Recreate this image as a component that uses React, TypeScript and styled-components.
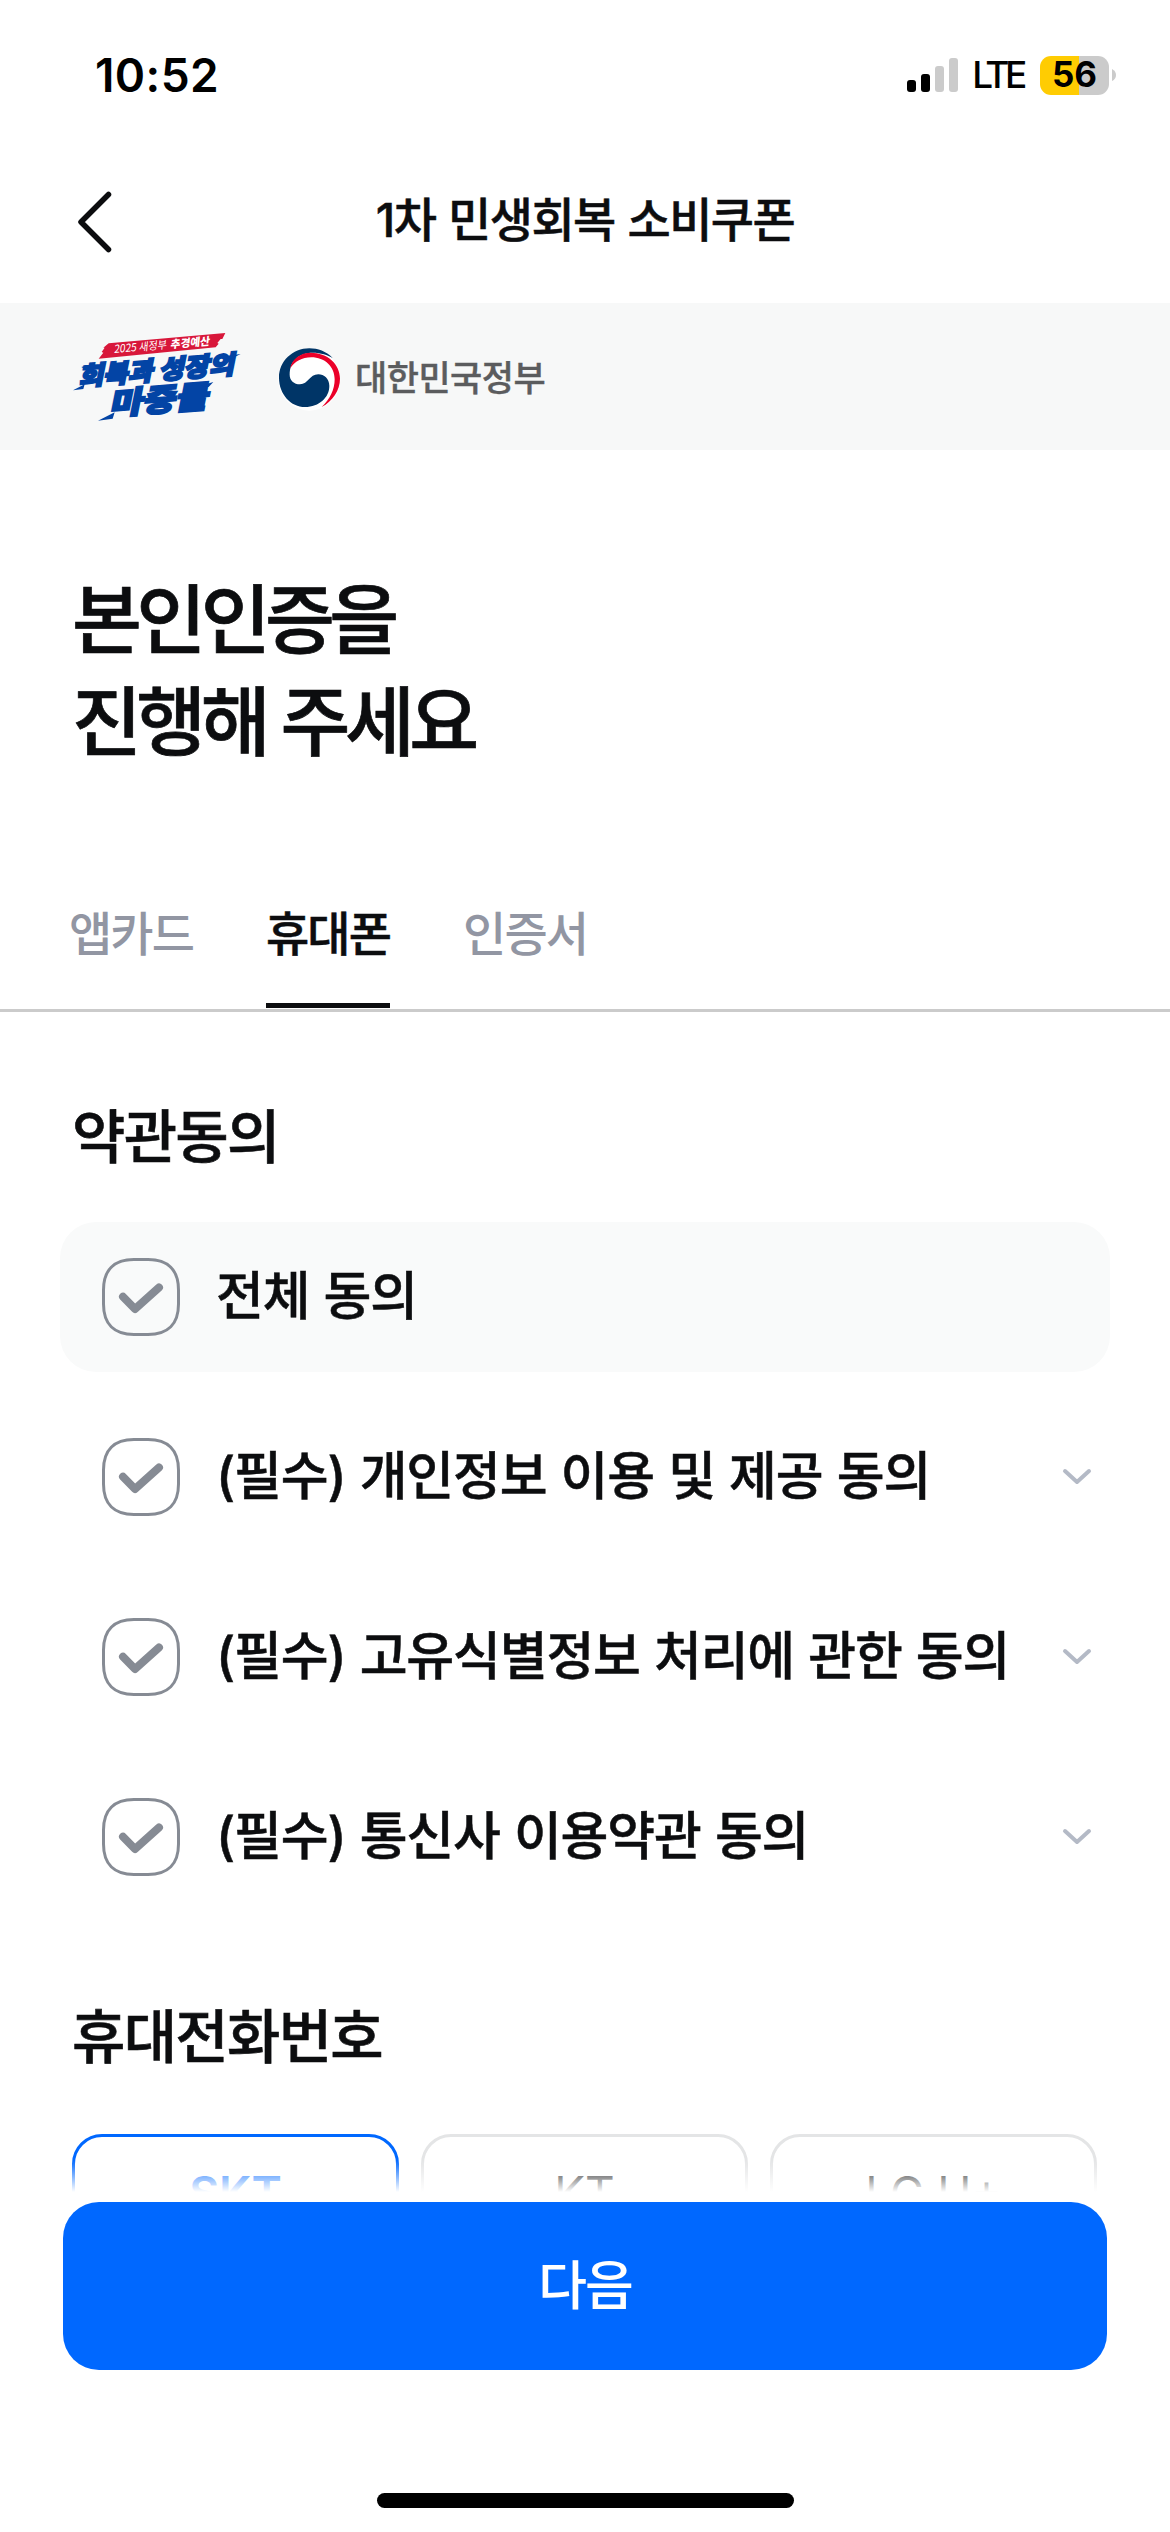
import React from "react";
import styled, { createGlobalStyle } from "styled-components";

const GlobalStyle = createGlobalStyle`
  * { box-sizing: border-box; }
  body { margin: 0; background: #fff; }
  button { font: inherit; color: inherit; background: none; border: 0; padding: 0; margin: 0; }
  svg { display: block; flex: none; overflow: visible; }
`;

const Screen = styled.div`
  width: 1170px;
  height: 2532px;
  display: flex;
  flex-direction: column;
  overflow: hidden;
  background: #fff;
  color: #0c0d0f;
  font-family: Inter, "Noto Sans CJK KR", sans-serif;
  white-space: nowrap;
`;

const StatusBar = styled.header`
  height: 150px;
  padding: 0 54px 0 95px;
  display: flex;
  align-items: center;
  justify-content: space-between;
  color: #000;
`;

const Clock = styled.time`
  font-size: 46px;
  font-weight: 600;
  letter-spacing: 0.4px;
`;

const StatusIcons = styled.div`
  display: flex;
  align-items: center;
`;

const Network = styled.span`
  margin: 0 17px 0 13px;
  font-size: 37px;
  line-height: 46px;
  font-weight: 500;
  letter-spacing: -4.4px;
`;

const Battery = styled.span`
  width: 69px;
  height: 39px;
  margin-right: 2px;
  border-radius: 11px;
  display: grid;
  justify-content: center;
  background: linear-gradient(90deg, #ffcc02 56%, #cbcbcb 56%);
  font-size: 35px;
  line-height: 37px;
  font-weight: 700;
`;

const NavBar = styled.nav`
  height: 153px;
  padding: 0 73px 9px;
  display: grid;
  grid-template-columns: 60px 1fr 60px;
  align-items: center;
`;

const NavTitle = styled.h1`
  margin: 0;
  padding-bottom: 4px;
  text-align: center;
  font-size: 47px;
  line-height: 60px;
  font-weight: 500;
  letter-spacing: -1.5px;
  word-spacing: 1.5px;
  -webkit-text-stroke: 0.5px currentColor;
`;

const Banner = styled.section`
  height: 147px;
  padding: 2px 64px 0;
  display: flex;
  align-items: center;
  gap: 16px;
  background: #f7f8f8;
`;

const Government = styled.div`
  display: flex;
  align-items: center;
  gap: 5px;
  color: #5b5c5e;
  font-size: 35px;
  line-height: 50px;
  font-weight: 500;
  letter-spacing: -0.5px;
  -webkit-text-stroke: 0.4px currentColor;
`;

const Heading = styled.h2`
  margin: 119px 0 0;
  padding: 0 72px;
  height: 202px;
  font-size: 76px;
  line-height: 102px;
  font-weight: 500;
  letter-spacing: -5.6px;
  word-spacing: 1px;
  -webkit-text-stroke: 0.7px currentColor;
`;

const Tabs = styled.div`
  margin-top: 95px;
  height: 146px;
  padding: 0 69px;
  display: flex;
  gap: 73px;
  border-bottom: 3px solid #cbcbcb;
`;

const Tab = styled.button<{ $active?: boolean }>`
  height: 142px;
  padding: 33px 0 0;
  display: flex;
  align-items: flex-start;
  font-size: 47px;
  line-height: 70px;
  font-weight: 500;
  letter-spacing: -1.9px;
  color: ${(p) => (p.$active ? "#0c0d0f" : "#9296a3")};
  -webkit-text-stroke: ${(p) => (p.$active ? "0.5px currentColor" : "0")};
  border-bottom: 5px solid ${(p) => (p.$active ? "#0c0d0f" : "transparent")};
`;

const SectionTitle = styled.h3<{ $top: number }>`
  margin: ${(p) => p.$top}px 0 0;
  padding: 0 72px;
  height: 86px;
  font-size: 58px;
  line-height: 86px;
  font-weight: 500;
  letter-spacing: -1.7px;
  -webkit-text-stroke: 0.6px currentColor;
`;

const Terms = styled.ul`
  list-style: none;
  margin: 42px 60px 0;
  padding: 0;
  display: flex;
  flex-direction: column;
  gap: 30px;
`;

const Term = styled.li<{ $filled?: boolean }>`
  height: 150px;
  padding: 0 18px 0 42px;
  display: flex;
  align-items: center;
  border-radius: 36px;
  background: ${(p) => (p.$filled ? "#f9fafa" : "transparent")};
`;

const TermLabel = styled.span`
  flex: 1;
  margin-left: 36px;
  font-size: 52px;
  line-height: 76px;
  font-weight: 500;
  letter-spacing: -1.15px;
  word-spacing: 1.5px;
  -webkit-text-stroke: 0.5px currentColor;
`;

const Carriers = styled.div`
  position: relative;
  height: 58px;
  margin-top: 54px;
  padding: 0 72px;
  display: grid;
  grid-template-columns: repeat(3, 327px);
  column-gap: 22px;
  overflow: hidden;

  &::after {
    content: "";
    position: absolute;
    inset: 26px 0 0;
    background: linear-gradient(rgba(255, 255, 255, 0), #fff);
  }
`;

const Carrier = styled.button<{ $selected?: boolean }>`
  height: 126px;
  padding-bottom: 9px;
  border: 3px solid ${(p) => (p.$selected ? "#0068ff" : "#e4e5e6")};
  border-radius: 30px;
  font-size: 46px;
  font-weight: ${(p) => (p.$selected ? 600 : 400)};
  color: ${(p) => (p.$selected ? "#0068ff" : "#0c0d0f")};
`;

const NextButton = styled.button`
  height: 168px;
  margin: 10px 63px 0;
  border-radius: 36px;
  background: #0068ff;
  color: #fff;
  font-size: 53px;
  line-height: 78px;
  font-weight: 500;
  letter-spacing: -2px;
`;

const HomeIndicator = styled.div`
  width: 417px;
  height: 15px;
  margin: 123px auto 0;
  border-radius: 8px;
  background: #000;
`;

const SignalIcon = () => (
  <svg width="52" height="35" viewBox="0 0 52 35">
    <rect x="0" y="22" width="9" height="12" rx="3" fill="#000" />
    <rect x="14" y="16" width="9" height="18" rx="3" fill="#000" />
    <rect x="28" y="8" width="9" height="26" rx="3" fill="#cbcbcb" />
    <rect x="42" y="0" width="9" height="34" rx="3" fill="#cbcbcb" />
  </svg>
);

const BatteryTip = () => (
  <svg width="5" height="14" viewBox="0 0 5 14">
    <path d="M1 1Q5 3 5 7T1 13Z" fill="#cbcbcb" />
  </svg>
);

const BackIcon = () => (
  <svg width="40" height="64" viewBox="0 0 40 64">
    <path d="M35.500 4.500L8 32l27.500 27.500" fill="none" stroke="#0c0d0f" strokeWidth="5.500" strokeLinecap="round" strokeLinejoin="round" />
  </svg>
);

const CampaignLogo = () => (
  <svg width="190" height="105" viewBox="0 0 570 315" fontFamily="Noto Sans CJK KR, sans-serif">
    <path d="M134 55L484 24l-9 18h-5l-10 12 4 2-9 11L104 101l14-18-5-2 9-13h-4Z" fill="#d8173a" />
    <g transform="matrix(1 -.085 -.1 1 150 84)" fill="#fff" fontSize="33">
      <text textLength="158" lengthAdjust="spacingAndGlyphs">2025 새정부</text>
      <text x="169" textLength="118" lengthAdjust="spacingAndGlyphs" fontWeight="800">추경예산</text>
    </g>
    <g fill="#0344a5" stroke="#0344a5" strokeWidth="6" fontWeight="900">
      <g transform="matrix(1 -.08 -.2 1 44 182)" fontSize="78">
        <text textLength="222" lengthAdjust="spacingAndGlyphs">회복과</text>
        <text x="240" textLength="226" lengthAdjust="spacingAndGlyphs">성장의</text>
      </g>
      <text transform="matrix(1 -.08 -.2 1 136 270)" fontSize="94" textLength="296" lengthAdjust="spacingAndGlyphs">마중물</text>
    </g>
    <path d="M27 196L62 178 58 192ZM102 287L152 262 146 281ZM485 93L530 87 500 102ZM52 126L88 116 66 134ZM410 182L448 171 434 186Z" fill="#0344a5" />
  </svg>
);

const TaegeukIcon = () => (
  <svg width="80" height="76" viewBox="0 0 240 228">
    <circle cx="118" cy="119" r="93" fill="#fff" />
    <path d="M188 54C168 34 144 25 118 25 68 25 27 64 27 113c0 50 36 88 78 88 43 0 73-29 73-63 0-22-16-35-33-35-27 0-30 30-55 30-18 0-31-12-31-29 0-8 1-16 3-22 6-24 30-42 60-44 28-1 50 6 66 16Z" fill="#003567" />
    <path d="M60 86C66 56 92 38 122 38c50 0 88 34 88 78 0 34-22 68-55 85 25-23 39-53 39-83 0-38-30-66-70-66-28 0-50 12-64 34Z" fill="#eb0029" />
  </svg>
);

const CheckIcon = () => (
  <svg width="78" height="78" viewBox="0 0 78 78" fill="none" stroke="#868b94">
    <path d="M32 1.500H46C66 1.500 76.500 12 76.500 32V46C76.500 66 66 76.500 46 76.500H32C12 76.500 1.500 66 1.500 46V32C1.500 12 12 1.500 32 1.500Z" strokeWidth="3" />
    <path d="M21 38.700l12 12.300L57 29.500" strokeWidth="8" strokeLinecap="round" strokeLinejoin="round" />
  </svg>
);

const ChevronIcon = () => (
  <svg width="30" height="18" viewBox="0 0 30 18">
    <path d="M3 3l12 11L27 3" fill="none" stroke="#b4bac6" strokeWidth="4" strokeLinecap="round" strokeLinejoin="round" />
  </svg>
);

const terms = [
  { label: "전체 동의", all: true },
  { label: "(필수) 개인정보 이용 및 제공 동의" },
  { label: "(필수) 고유식별정보 처리에 관한 동의" },
  { label: "(필수) 통신사 이용약관 동의" },
];

export default function App() {
  return (
    <Screen>
      <GlobalStyle />
      <StatusBar>
        <Clock>10:52</Clock>
        <StatusIcons>
          <SignalIcon />
          <Network>LTE</Network>
          <Battery>56</Battery>
          <BatteryTip />
        </StatusIcons>
      </StatusBar>
      <NavBar>
        <button aria-label="뒤로"><BackIcon /></button>
        <NavTitle>1차 민생회복 소비쿠폰</NavTitle>
      </NavBar>
      <Banner>
        <CampaignLogo />
        <Government>
          <TaegeukIcon />
          <span>대한민국정부</span>
        </Government>
      </Banner>
      <Heading>본인인증을<br />진행해 주세요</Heading>
      <Tabs>
        <Tab>앱카드</Tab>
        <Tab $active>휴대폰</Tab>
        <Tab>인증서</Tab>
      </Tabs>
      <SectionTitle $top={82}>약관동의</SectionTitle>
      <Terms>
        {terms.map((t) => (
          <Term key={t.label} $filled={t.all}>
            <CheckIcon />
            <TermLabel>{t.label}</TermLabel>
            {!t.all && <ChevronIcon />}
          </Term>
        ))}
      </Terms>
      <SectionTitle $top={82}>휴대전화번호</SectionTitle>
      <Carriers>
        <Carrier $selected>SKT</Carrier>
        <Carrier>KT</Carrier>
        <Carrier>LG U+</Carrier>
      </Carriers>
      <NextButton>다음</NextButton>
      <HomeIndicator />
    </Screen>
  );
}
